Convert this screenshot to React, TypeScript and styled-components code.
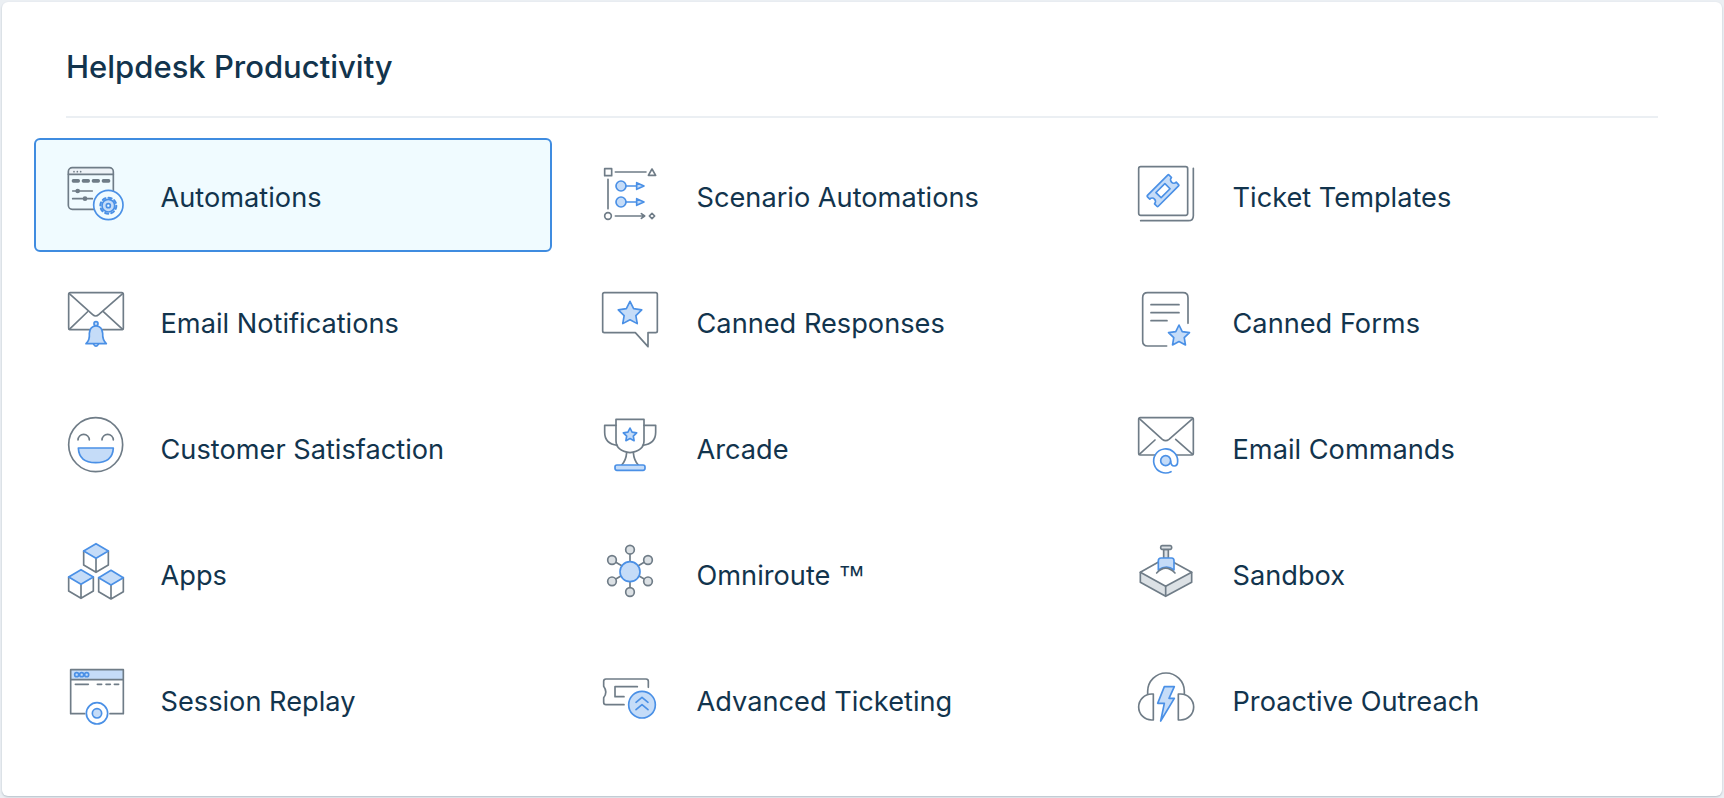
import { ReactNode } from 'react';
import styled, { createGlobalStyle } from 'styled-components';

const GlobalStyle = createGlobalStyle`
  html, body {
    margin: 0;
    padding: 0;
    background: #ebeff3;
  }
`;

const Panel = styled.section`
  box-sizing: border-box;
  width: 1720px;
  height: 794px;
  margin: 2px;
  background: #ffffff;
  border-radius: 6px;
  box-shadow: 0 1px 2px rgba(18, 52, 77, 0.25);
  font-family: Inter, 'Liberation Sans', sans-serif;
  color: #12344d;
`;

const Heading = styled.h2`
  box-sizing: border-box;
  height: 116px;
  margin: 0 64px 0 64px;
  padding-top: 47px;
  border-bottom: 2px solid #ebeff3;
  font-size: 31px;
  line-height: 36px;
  font-weight: 500;
`;

const Grid = styled.div`
  display: grid;
  grid-template-columns: repeat(3, 518px);
  grid-auto-rows: 114px;
  column-gap: 18px;
  row-gap: 12px;
  padding: 20px 0 0 32px;
`;

const Item = styled.a<{ $selected?: boolean }>`
  display: flex;
  align-items: center;
  gap: 26.5px;
  box-sizing: border-box;
  padding: 6px 0 0 28px;
  border: 2px solid ${(p) => (p.$selected ? '#3f8ce0' : 'transparent')};
  border-radius: 6px;
  background: ${(p) => (p.$selected ? '#f0fbff' : 'transparent')};
`;

const Icon = styled.svg`
  flex: none;
  width: 70px;
  height: 70px;
`;

const Label = styled.span`
  font-size: 27.2px;
  line-height: 36px;
  font-weight: 400;
`;

const Mark = styled.span`
  font-family: 'Liberation Sans', sans-serif;
`;

const Outline = styled.g`
  fill: none;
  stroke: #6f7c87;
  stroke-width: 5;
  stroke-linejoin: round;
  stroke-linecap: round;
`;

const Accent = styled.g`
  fill: #c5dcf8;
  stroke: #4a90e6;
  stroke-width: 5;
  stroke-linejoin: round;
  stroke-linecap: round;
`;

const Solid = styled.g`
  fill: #6f7c87;
`;

const HeaderStrip = styled.path`
  fill: #edf2f7;
`;

const Tint = styled.rect`
  fill: #c5dcf8;
`;

const Slab = styled.path`
  fill: #dce1e5;
`;

const Handle = styled.path`
  fill: #dce1e5;
  stroke: #6f7c87;
  stroke-width: 5;
  stroke-linejoin: round;
`;

const Blank = styled.circle`
  fill: #ffffff;
`;

const Satellite = styled.circle`
  fill: #dce1e5;
  stroke: #6f7c87;
  stroke-width: 5;
`;

const star = (cx: number, cy: number, r: number) => {
  const points: string[] = [];
  for (let i = 0; i < 10; i++) {
    const radius = i % 2 === 0 ? r : r * 0.5;
    const angle = (Math.PI / 5) * i - Math.PI / 2;
    points.push(`${(cx + radius * Math.cos(angle)).toFixed(1)},${(cy + radius * Math.sin(angle)).toFixed(1)}`);
  }
  return points.join(' ');
};

const Cube = ({ dx, dy }: { dx: number; dy: number }) => (
  <g transform={`translate(${dx} ${dy})`}>
    <Outline>
      <path d="M101 66V108L138 130L175 108V66M138 88V130" />
    </Outline>
    <Accent>
      <path d="M138 44L175 66L138 88L101 66Z" />
    </Accent>
  </g>
);

type Entry = { name: string; mark?: string; view: string; art: ReactNode; selected?: boolean };

const entries: Entry[] = [
  {
    name: 'Automations',
    view: '42 39',
    selected: true,
    art: (
      <>
        <HeaderStrip d="M57 73V65Q57 55 67 55H178Q188 55 188 65V73Z" />
        <Outline>
          <rect x="55" y="53" width="135" height="125" rx="12" />
          <path d="M55 73H190M68 123H127M68 146H127" />
        </Outline>
        <Solid>
          <circle cx="72" cy="65" r="2.5" />
          <circle cx="82" cy="65" r="2.5" />
          <circle cx="92" cy="65" r="2.5" />
          <rect x="65" y="87" width="25" height="11" rx="5" />
          <rect x="95" y="87" width="25" height="11" rx="5" />
          <rect x="125" y="87" width="25" height="11" rx="5" />
          <rect x="155" y="87" width="26" height="11" rx="5" />
          <circle cx="83" cy="123" r="7" />
          <circle cx="105" cy="146" r="7" />
        </Solid>
        <Accent>
          <circle cx="175" cy="165" r="44" fill="#f0fbff" />
          <circle cx="175" cy="167" r="19" />
          <circle cx="175" cy="167" r="24" fill="none" strokeWidth="6" strokeDasharray="9.8 9" />
          <circle cx="175" cy="167" r="6" fill="#f0fbff" />
        </Accent>
      </>
    ),
  },
  {
    name: 'Scenario Automations',
    view: '30 39',
    art: (
      <>
        <Outline>
          <rect x="44" y="56" width="21" height="21" />
          <path d="M76 66H168M54 88V176M76 198H162M154 191L164 198L154 205" />
          <path d="M186 57L197 76H175Z" />
          <circle cx="54" cy="198" r="10" />
          <path d="M186 190L194 198L186 206L178 198Z" />
        </Outline>
        <Accent>
          <circle cx="93" cy="108" r="15" />
          <circle cx="93" cy="156" r="15" />
          <path d="M108 108H140M108 156H140" />
          <path d="M140 98L162 108L140 118Z" />
          <path d="M140 146L162 156L140 166Z" />
        </Accent>
      </>
    ),
  },
  {
    name: 'Ticket Templates',
    view: '33 39',
    art: (
      <>
        <Outline>
          <rect x="41" y="50" width="147" height="146" rx="6" />
          <path d="M47 212H190Q205 212 205 197V55" />
        </Outline>
        <Accent transform="rotate(-45 114 122)">
          <path d="M68 102Q68 99 71 99H157Q160 99 160 102V112A10 10 0 0 0 160 132V142Q160 145 157 145H71Q68 145 68 142V132A10 10 0 0 0 68 112Z" />
          <rect x="95" y="111" width="38" height="22" fill="#ffffff" />
        </Accent>
      </>
    ),
  },
  {
    name: 'Email Notifications',
    view: '42 27',
    art: (
      <>
        <Outline>
          <rect x="56" y="38" width="164" height="111" rx="5" />
          <path d="M58 41L128 104Q137 112 146 104L218 41M58 148L112 96M218 148L160 95" />
        </Outline>
        <Accent>
          <circle cx="138" cy="131" r="6" />
          <path d="M108 191Q120 180 118 160Q120 138 138 138Q156 138 158 160Q157 180 169 191Z" />
          <path d="M131 193Q138 204 145 193" fill="none" />
        </Accent>
      </>
    ),
  },
  {
    name: 'Canned Responses',
    view: '30 417',
    art: (
      <>
        <Outline>
          <path d="M43 428H197Q202 428 202 433V543Q202 548 197 548H174V590L136 548H43Q38 548 38 543V433Q38 428 43 428Z" />
        </Outline>
        <Accent>
          <polygon points={star(120, 491, 37)} />
        </Accent>
      </>
    ),
  },
  {
    name: 'Canned Forms',
    view: '33 417',
    art: (
      <>
        <Outline>
          <path d="M125 588H68Q53 588 53 573V443Q53 428 68 428H174Q189 428 189 443V520" />
          <path d="M78 464H162M78 488H162M78 512H126" />
        </Outline>
        <Accent>
          <polygon points={star(162, 558, 33)} />
        </Accent>
      </>
    ),
  },
  {
    name: 'Customer Satisfaction',
    view: '42 408',
    art: (
      <>
        <Outline>
          <circle cx="137" cy="497" r="81" />
          <path d="M84 483A17 17 0 0 1 118 483M156 483A17 17 0 0 1 190 483" />
        </Outline>
        <Accent>
          <path d="M85 507H190Q188 551 137 551Q87 551 85 507Z" />
        </Accent>
      </>
    ),
  },
  {
    name: 'Arcade',
    view: '30 33',
    art: (
      <>
        <Outline>
          <path d="M78 46H162V110Q162 140 120 146Q78 140 78 110Z" />
          <path d="M78 64H44V85Q44 120 82 124M162 64H197V85Q197 120 158 124" />
          <path d="M110 146Q108 170 95 183M130 146Q132 170 145 183" />
        </Outline>
        <Accent>
          <polygon points={star(120, 93, 21)} />
          <rect x="75" y="183" width="90" height="16" rx="6" />
        </Accent>
      </>
    ),
  },
  {
    name: 'Email Commands',
    view: '33 33',
    art: (
      <>
        <Outline>
          <rect x="41" y="41" width="164" height="112" rx="5" />
          <path d="M43 44L112 106Q122 114 132 106L203 44M43 151L90 108M203 151L152 106" />
        </Outline>
        <Blank cx="122" cy="170" r="36" />
        <Accent>
          <circle cx="122" cy="170" r="15" />
          <path d="M138 203A36 36 0 1 1 158 172Q158 186 148 186Q138 186 137 172" fill="none" />
        </Accent>
      </>
    ),
  },
  {
    name: 'Apps',
    view: '42 36',
    art: (
      <>
        <Cube dx={0} dy={0} />
        <Cube dx={-45} dy={78} />
        <Cube dx={45} dy={80} />
      </>
    ),
  },
  {
    name: 'Omniroute',
    mark: '™',
    view: '30 411',
    art: (
      <>
        <Outline>
          <path d="M120 437V564M66 468L174 532M174 468L66 532" />
        </Outline>
        <Satellite cx="120" cy="437" r="13" />
        <Satellite cx="174" cy="468" r="13" />
        <Satellite cx="174" cy="532" r="13" />
        <Satellite cx="120" cy="564" r="13" />
        <Satellite cx="66" cy="532" r="13" />
        <Satellite cx="66" cy="468" r="13" />
        <Accent>
          <circle cx="120" cy="503" r="30" />
        </Accent>
      </>
    ),
  },
  {
    name: 'Sandbox',
    view: '33 411',
    art: (
      <>
        <Slab d="M46 505V535L122 577L200 535V505L122 547Z" />
        <Outline>
          <path d="M46 505L122 462L200 505L122 547Z" />
          <path d="M46 505V535L122 577L200 535V505M122 547V577" />
        </Outline>
        <Handle d="M116 436H130V464H116Z" />
        <Handle d="M111 425H136Q140 425 140 430Q140 436 136 436H111Q107 436 107 430Q107 425 111 425Z" />
        <Accent>
          <path d="M100 498V470Q100 462 108 462H140Q147 462 147 470V498Q125 480 100 498Z" />
        </Accent>
        <Outline>
          <path d="M95 507Q122 478 150 507" />
        </Outline>
      </>
    ),
  },
  {
    name: 'Session Replay',
    view: '42 414',
    art: (
      <>
        <Tint x="62" y="422" width="158" height="30" />
        <Outline>
          <path d="M104 554H62V422H220V554H180M62 452H220" />
          <path d="M76 466H115M142 466H155M168 466H181M193 466H206" />
        </Outline>
        <Accent>
          <circle cx="80" cy="437" r="6" />
          <circle cx="95" cy="437" r="6" />
          <circle cx="110" cy="437" r="6" />
          <circle cx="141" cy="553" r="32" fill="none" />
          <circle cx="141" cy="553" r="14" />
        </Accent>
      </>
    ),
  },
  {
    name: 'Advanced Ticketing',
    view: '30 24',
    art: (
      <>
        <Outline>
          <path d="M102 137H48Q41 137 41 130V116Q54 100 41 82V67Q41 60 48 60H168Q175 60 175 67V85" />
          <path d="M142 83H75V113H102" />
        </Outline>
        <Accent>
          <circle cx="156" cy="137" r="40" />
          <path d="M138 130L156 115L174 130M138 152L156 137L174 152" fill="none" />
        </Accent>
      </>
    ),
  },
  {
    name: 'Proactive Outreach',
    view: '33 24',
    art: (
      <>
        <Outline>
          <path d="M68 105V97A55 55 0 0 1 178 97V105" />
          <path d="M85 105H80A39 39 0 0 0 80 183H85Z" />
          <path d="M160 105H167A39 39 0 0 1 167 183H160Z" />
        </Outline>
        <Accent>
          <polygon points="118,83 148,83 132,118 148,118 107,186 118,133 98,133" />
        </Accent>
      </>
    ),
  },
];

export default function App() {
  return (
    <>
      <GlobalStyle />
      <Panel>
        <Heading>Helpdesk Productivity</Heading>
        <Grid>
          {entries.map((entry) => (
            <Item key={entry.name} $selected={entry.selected}>
              <Icon viewBox={`${entry.view} 210 210`}>{entry.art}</Icon>
              <Label>
                {entry.name}
                {entry.mark && <Mark> {entry.mark}</Mark>}
              </Label>
            </Item>
          ))}
        </Grid>
      </Panel>
    </>
  );
}
